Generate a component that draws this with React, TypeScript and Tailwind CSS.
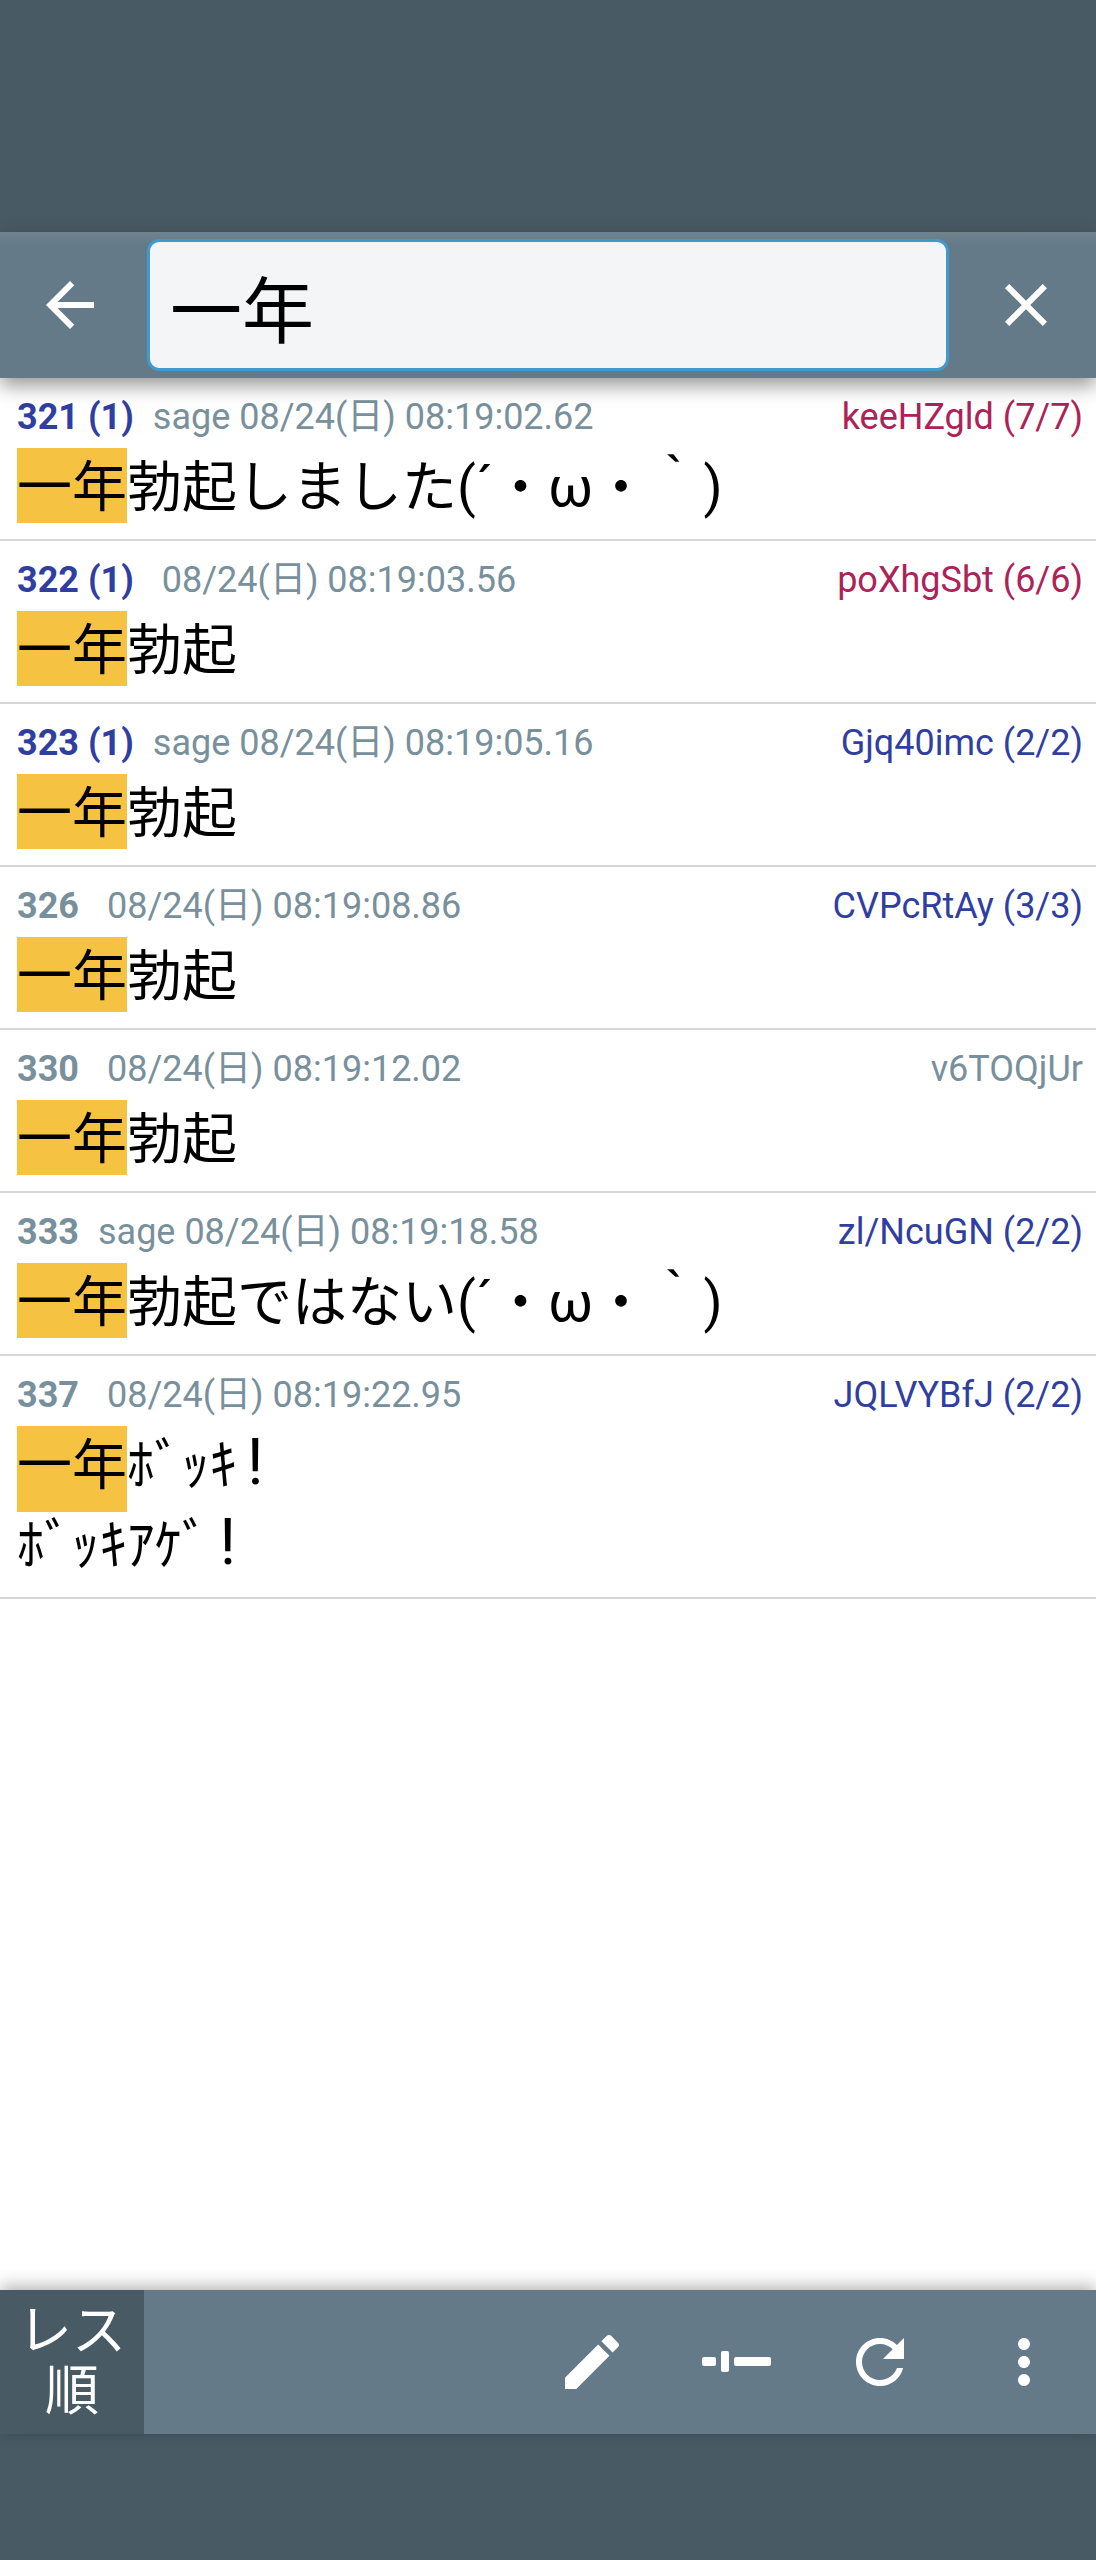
const posts = [
  { num: "321 (1)", mine: true, sage: true, date: "08/24(日) 08:19:02.62", id: "keeHZgld (7/7)", idColor: "text-[#ad2258]", lines: ["勃起しました(´・ω・｀)"] },
  { num: "322 (1)", mine: true, sage: false, date: "08/24(日) 08:19:03.56", id: "poXhgSbt (6/6)", idColor: "text-[#ad2258]", lines: ["勃起"] },
  { num: "323 (1)", mine: true, sage: true, date: "08/24(日) 08:19:05.16", id: "Gjq40imc (2/2)", idColor: "text-[#303f9f]", lines: ["勃起"] },
  { num: "326", mine: false, sage: false, date: "08/24(日) 08:19:08.86", id: "CVPcRtAy (3/3)", idColor: "text-[#303f9f]", lines: ["勃起"] },
  { num: "330", mine: false, sage: false, date: "08/24(日) 08:19:12.02", id: "v6TOQjUr", idColor: "text-[#78909c]", lines: ["勃起"] },
  { num: "333", mine: false, sage: true, date: "08/24(日) 08:19:18.58", id: "zl/NcuGN (2/2)", idColor: "text-[#303f9f]", lines: ["勃起ではない(´・ω・｀)"] },
  { num: "337", mine: false, sage: false, date: "08/24(日) 08:19:22.95", id: "JQLVYBfJ (2/2)", idColor: "text-[#303f9f]", lines: ["ﾎﾞｯｷ", "ﾎﾞｯｷｱｹﾞ"] },
]

const fontStack = "font-['Roboto','Noto_Sans_CJK_JP',sans-serif]"

// The exclamation mark is taller than the text around it
const Bang = () => <span className="ml-[10px] inline-block text-[64px] leading-none">!</span>

function Post({ post }: { post: (typeof posts)[number] }) {
  const tall = post.lines.length > 1

  return (
    <div className="border-b-2 border-[#d6d6d6] pl-[17px] pr-[13px] pb-[11px]">
      <div className="flex h-[70px] items-center justify-between pt-[7px] text-[36px] leading-[48px]">
        <div className="text-[#78909c] whitespace-nowrap">
          <span className={`font-bold ${post.mine ? "text-[#303f9f]" : ""}`}>{post.num}</span>
          {post.sage ? (
            <span className="ml-[19px]">sage {post.date}</span>
          ) : (
            <span className="ml-[28px]">{post.date}</span>
          )}
        </div>
        <div className={`whitespace-nowrap ${post.idColor}`}>{post.id}</div>
      </div>
      <div className="h-[80px] text-[55px] leading-[79px] text-black whitespace-nowrap">
        <span className={`inline-block bg-[#f5c242] align-top leading-[79px] ${tall ? "h-[86px]" : "h-[75px]"}`}>一年</span>
        {post.lines[0]}
        {tall && <Bang />}
      </div>
      {post.lines.slice(1).map(line => (
        <div key={line} className="h-[80px] text-[55px] leading-[79px] text-black whitespace-nowrap">
          {line}
          <Bang />
        </div>
      ))}
    </div>
  )
}

export default function App() {
  return (
    <div className={`flex h-[2560px] w-[1096px] flex-col overflow-hidden bg-white ${fontStack}`}>
      <div className="h-[232px] shrink-0 bg-[#485a64]" />

      {/* Search bar */}
      <div className="relative z-10 flex h-[146px] shrink-0 items-center bg-gradient-to-b from-[#6f838f] from-0% to-[#647a88] to-[10%] shadow-[0_8px_18px_rgba(0,0,0,0.4)]">
        <div className="flex w-[147px] shrink-0 justify-center pr-[8px]">
          <svg width="72" height="72" viewBox="0 0 24 24" fill="#fff">
            <path d="M20 11H7.83l5.59-5.59L12 4l-8 8 8 8 1.41-1.41L7.83 13H20v-2z" />
          </svg>
        </div>
        <input
          readOnly
          value="一年"
          className="h-[132px] w-[802px] shrink-0 rounded-[12px] border-[3px] border-[#4299cc] bg-[#f4f5f7] pl-[20px] text-[72px] text-black outline-none"
        />
        <div className="flex flex-1 justify-center pl-[6px]">
          <svg width="72" height="72" viewBox="0 0 24 24" fill="#fff">
            <path d="M19 6.41 17.59 5 12 10.59 6.41 5 5 6.41 10.59 12 5 17.59 6.41 19 12 13.41 17.59 19 19 17.59 13.41 12z" />
          </svg>
        </div>
      </div>

      {/* Posts */}
      <div className="min-h-0 flex-1">
        {posts.map(post => (
          <Post key={post.num} post={post} />
        ))}
      </div>

      {/* Bottom toolbar */}
      <div className="relative z-10 flex h-[144px] shrink-0 items-center bg-[#647a88] shadow-[0_-4px_16px_rgba(0,0,0,0.3)]">
        <div className="flex h-full w-[144px] shrink-0 items-center justify-center bg-[#485a64] text-center text-[54px] leading-[60px] text-white">
          レス
          <br />
          順
        </div>
        <div className="flex flex-1 justify-end">
          <div className="flex h-[144px] w-[144px] items-center justify-center">
            <svg width="72" height="72" viewBox="0 0 24 24" fill="#fff">
              <path d="M3 17.25V21h3.75L17.81 9.94l-3.75-3.75L3 17.25zM20.71 7.04c.39-.39.39-1.02 0-1.41l-2.34-2.34c-.39-.39-1.02-.39-1.41 0l-1.83 1.83 3.75 3.75 1.83-1.83z" />
            </svg>
          </div>
          <div className="flex h-[144px] w-[144px] items-center justify-center">
            <svg width="72" height="72" viewBox="0 0 72 72" fill="#fff">
              <rect x="2" y="31" width="14" height="9" rx="2" />
              <rect x="21" y="25" width="8" height="21" rx="2" />
              <rect x="34" y="31" width="37" height="9" rx="2" />
            </svg>
          </div>
          <div className="flex h-[144px] w-[144px] items-center justify-center">
            <svg width="72" height="72" viewBox="0 0 24 24" fill="#fff">
              <path d="M17.65 6.35C16.2 4.9 14.21 4 12 4c-4.42 0-7.99 3.58-7.99 8s3.57 8 7.99 8c3.73 0 6.84-2.55 7.73-6h-2.08c-.82 2.33-3.04 4-5.65 4-3.31 0-6-2.69-6-6s2.69-6 6-6c1.66 0 3.14.69 4.22 1.78L13 11h7V4l-2.35 2.35z" />
            </svg>
          </div>
          <div className="flex h-[144px] w-[144px] items-center justify-center">
            <svg width="72" height="72" viewBox="0 0 24 24" fill="#fff">
              <path d="M12 8c1.1 0 2-.9 2-2s-.9-2-2-2-2 .9-2 2 .9 2 2 2zm0 2c-1.1 0-2 .9-2 2s.9 2 2 2 2-.9 2-2-.9-2-2-2zm0 6c-1.1 0-2 .9-2 2s.9 2 2 2 2-.9 2-2-.9-2-2-2z" />
            </svg>
          </div>
        </div>
      </div>

      <div className="h-[126px] shrink-0 bg-[#485a64]" />
    </div>
  )
}
